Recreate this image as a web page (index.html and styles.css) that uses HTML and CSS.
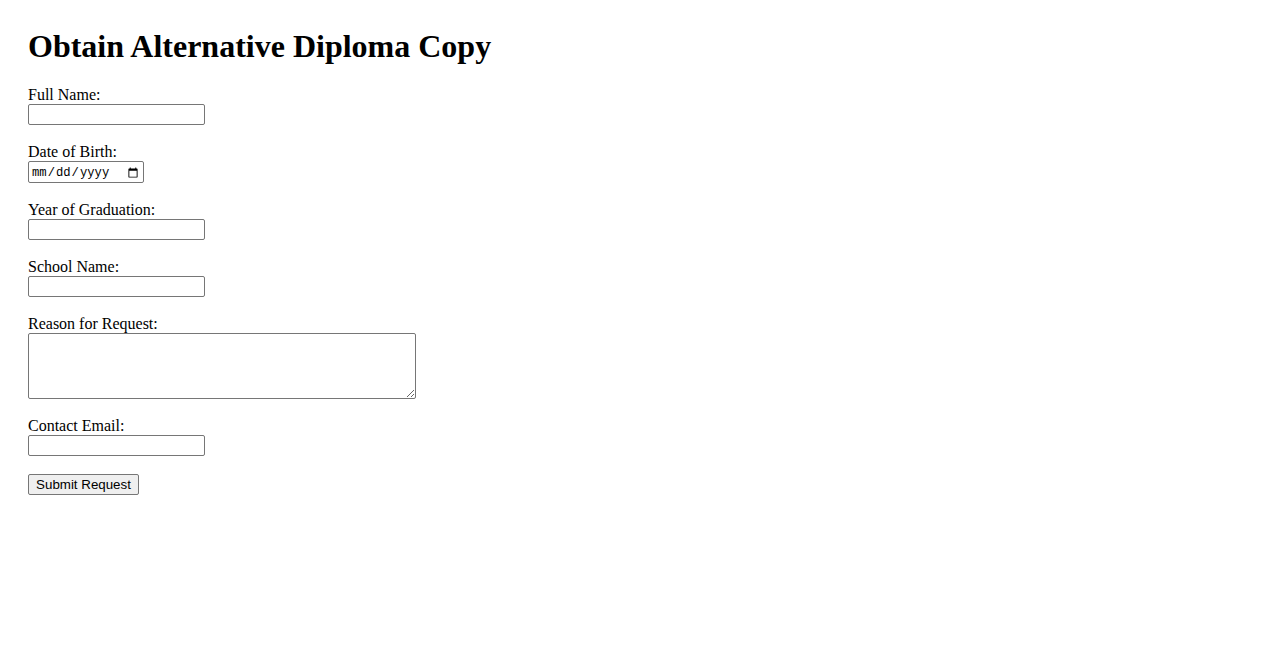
FILE: index.html
```html
<!DOCTYPE html>
<html lang="en">
<head>
    <meta charset="UTF-8">
    <meta name="viewport" content="width=device-width, initial-scale=1.0">
    <title>Obtain Alternative Diploma Copy</title>
    <link rel="stylesheet" href="styles.css">
</head>
<body>

    <h1>Obtain Alternative Diploma Copy</h1>

    <form class="request-form">
        <div class="form-field">
            <label for="fullName">Full Name:</label>
            <input type="text" id="fullName" name="fullName">
        </div>

        <div class="form-field">
            <label for="dob">Date of Birth:</label>
            <input type="date" id="dob" name="dob" class="date-input">
        </div>

        <div class="form-field">
            <label for="gradYear">Year of Graduation:</label>
            <input type="text" id="gradYear" name="gradYear">
        </div>

        <div class="form-field">
            <label for="school">School Name:</label>
            <input type="text" id="school" name="school">
        </div>

        <div class="form-field">
            <label for="reason">Reason for Request:</label>
            <textarea id="reason" name="reason"></textarea>
        </div>

        <div class="form-field">
            <label for="email">Contact Email:</label>
            <input type="email" id="email" name="email">
        </div>

        <!-- Submit -->
        <button type="submit" class="submit-btn">Submit Request</button>
    </form>

</body>
</html>
```

FILE: styles.css
```css
body {
    margin: 28px;
    font-family: 'Liberation Serif', 'Times New Roman', serif;
    font-size: 16px;
    color: #000;
    background: #fff;
}

h1 {
    margin: 0 0 21px;
    font-size: 32px;
    line-height: 37px;
    font-weight: bold;
}

.form-field {
    margin-bottom: 18px;
}

.form-field label {
    display: block;
    line-height: 18px;
}

.form-field input,
.form-field textarea {
    display: block;
    box-sizing: border-box;
    margin: 0;
    width: 177px;
    height: 21px;
    border: 1px solid #767676;
    border-radius: 2px;
    font-family: 'Liberation Sans', Arial, sans-serif;
    font-size: 13.33px;
}

.form-field .date-input {
    width: 116px;
    height: 22px;
    padding: 2px 2px 0;
    font-family: 'Liberation Mono', 'Courier New', monospace;
    font-size: 12.2px;
}

.form-field textarea {
    width: 388px;
    height: 66px;
    padding: 2px;
    resize: both;
}

.submit-btn {
    box-sizing: border-box;
    width: 111px;
    height: 21px;
    margin: 0;
    padding: 1px 6px;
    background-color: #efefef;
    border: 1px solid #767676;
    border-radius: 2px;
    font-family: 'Liberation Sans', Arial, sans-serif;
    font-size: 13.33px;
    color: #000;
}
```
